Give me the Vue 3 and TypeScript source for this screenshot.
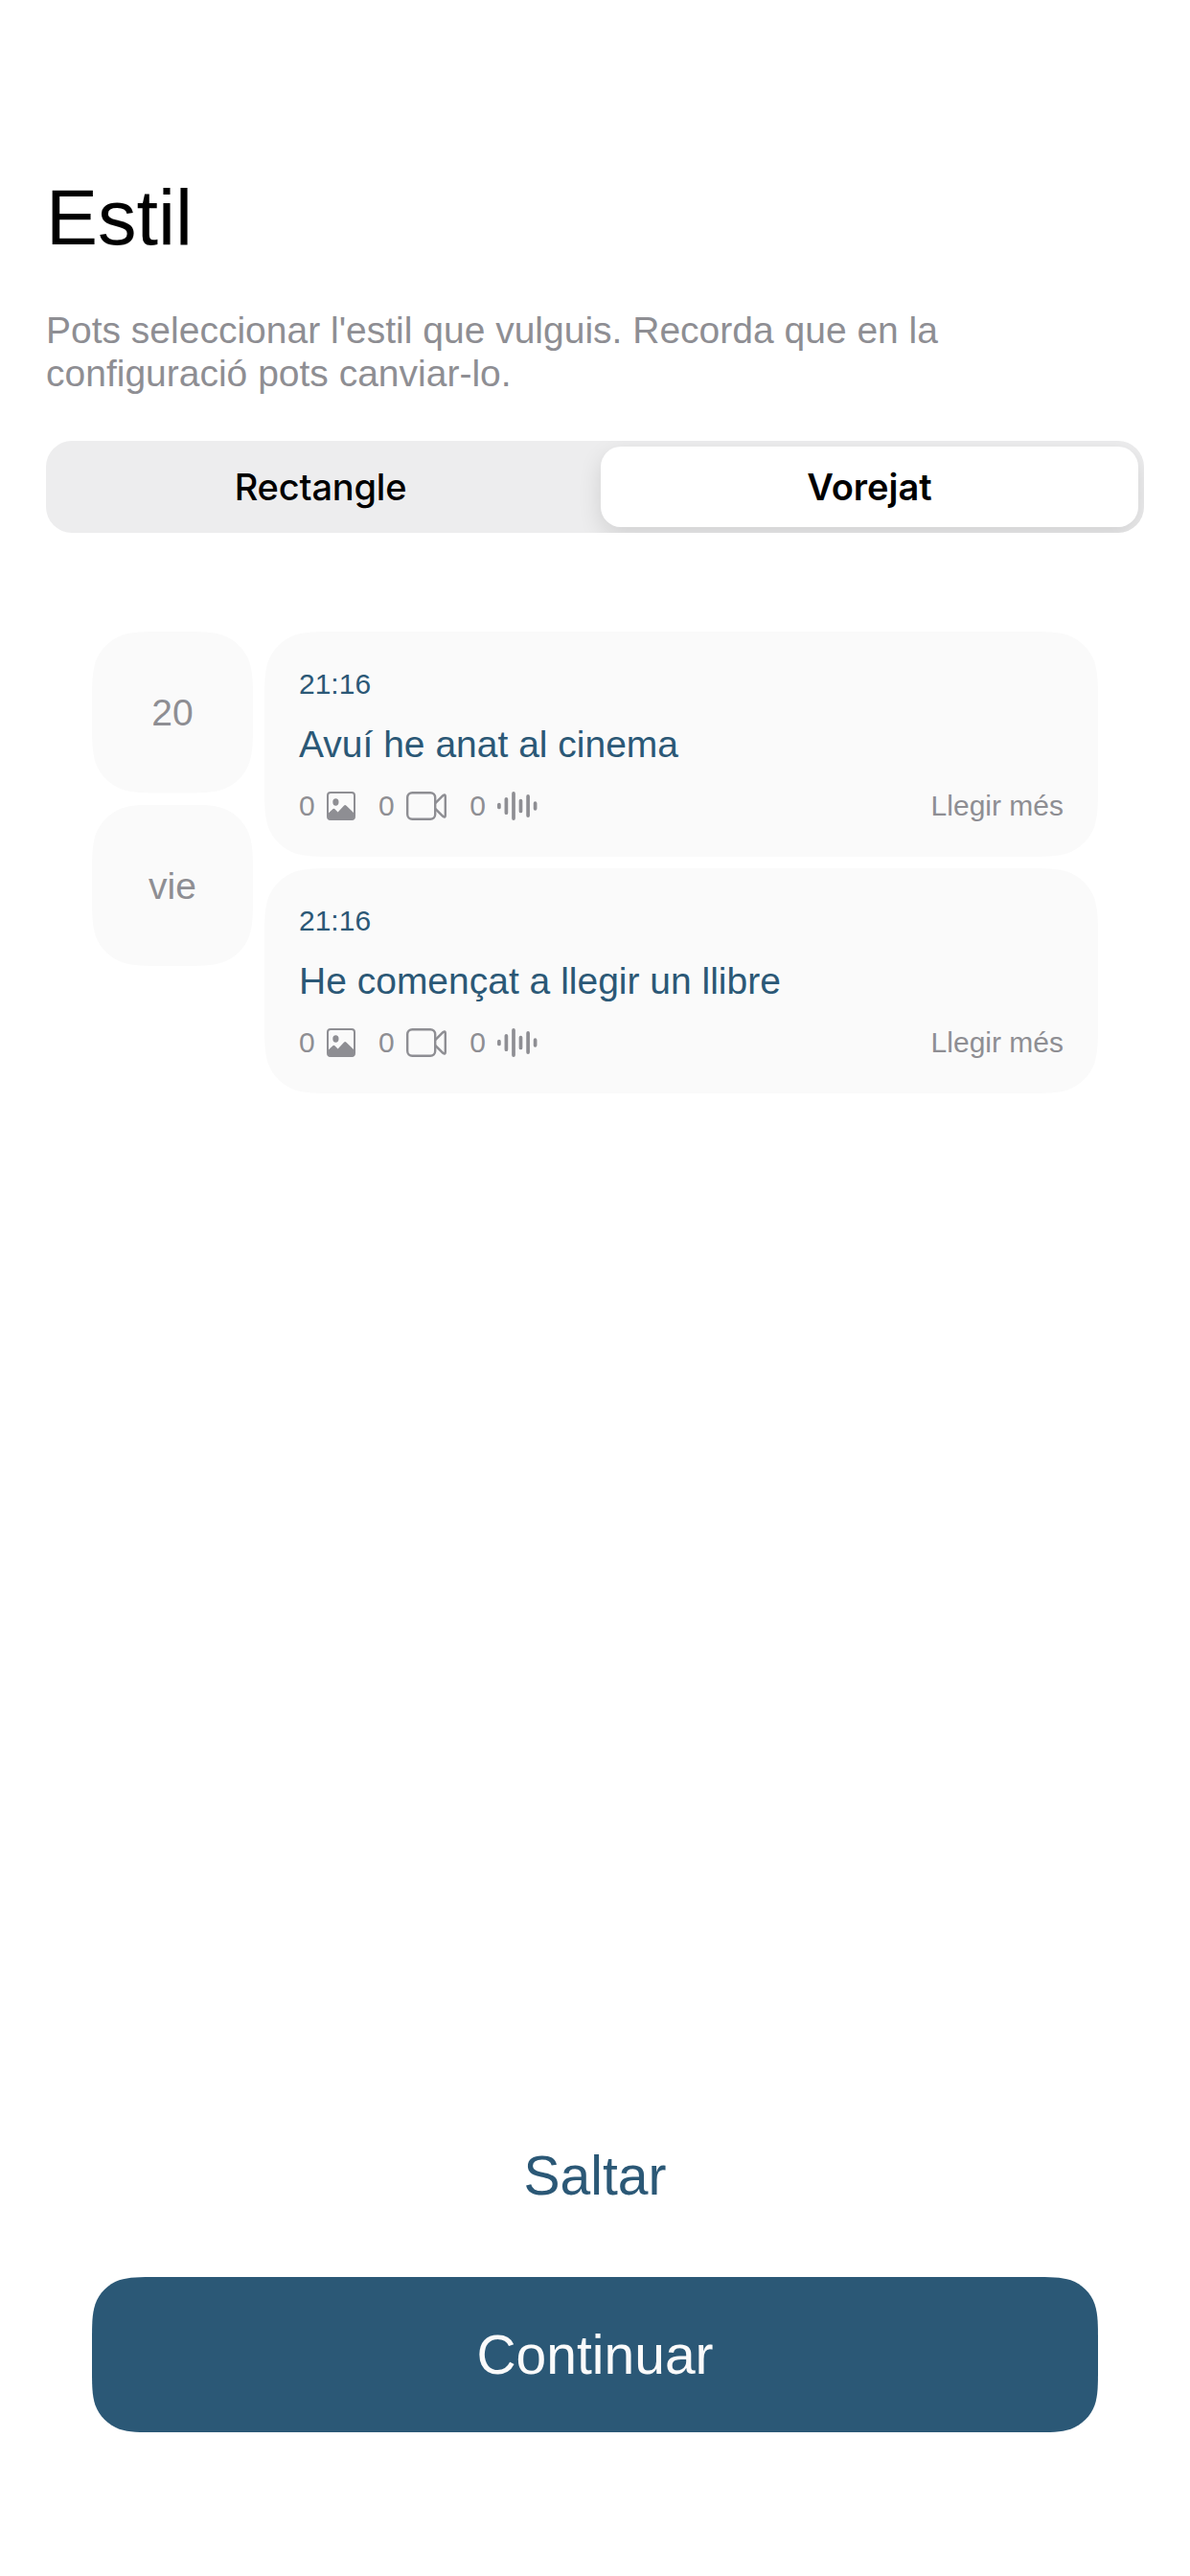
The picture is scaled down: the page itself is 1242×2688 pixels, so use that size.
<script setup lang="ts">
import { ref } from 'vue'

interface Entry {
  time: string
  title: string
}

const options: string[] = ['Rectangle', 'Vorejat']
const selected = ref('Vorejat')
const dayParts: string[] = ['20', 'vie']
const entries: Entry[] = [
  { time: '21:16', title: 'Avuí he anat al cinema' },
  { time: '21:16', title: 'He començat a llegir un llibre' },
]

// Outline of a rectangle with continuous (squircle-like) corners.
function smooth(w: number, h: number, r: number): { clipPath: string } {
  const a = 1.528665 * r
  const b = 1.088493 * r
  const c = 0.868407 * r
  const d = 0.631494 * r
  const e = 0.074911 * r
  const f = 0.372824 * r
  const g = 0.16906 * r
  const path = [
    `M${a} 0L${w - a} 0`,
    `C${w - b} 0 ${w - c} 0 ${w - d} ${e}`,
    `C${w - f} ${g} ${w - g} ${f} ${w - e} ${d}`,
    `C${w} ${c} ${w} ${b} ${w} ${a}`,
    `L${w} ${h - a}`,
    `C${w} ${h - b} ${w} ${h - c} ${w - e} ${h - d}`,
    `C${w - g} ${h - f} ${w - f} ${h - g} ${w - d} ${h - e}`,
    `C${w - c} ${h} ${w - b} ${h} ${w - a} ${h}`,
    `L${a} ${h}`,
    `C${b} ${h} ${c} ${h} ${d} ${h - e}`,
    `C${f} ${h - g} ${g} ${h - f} ${e} ${h - d}`,
    `C0 ${h - c} 0 ${h - b} 0 ${h - a}`,
    `L0 ${a}`,
    `C0 ${b} 0 ${c} ${e} ${d}`,
    `C${g} ${f} ${f} ${g} ${d} ${e}`,
    `C${c} 0 ${b} 0 ${a} 0Z`,
  ].join('')
  return { clipPath: `path("${path}")` }
}

const dayShape = smooth(168, 168.5, 50)
const entryShape = smooth(870, 235, 50)
const buttonShape = smooth(1050, 162, 45)
</script>

<template>
  <main class="screen">
    <h1 class="heading">Estil</h1>
    <p class="intro">
      Pots seleccionar l'estil que vulguis. Recorda que en la<br />configuració pots canviar-lo.
    </p>

    <div class="segments">
      <button
        v-for="option in options"
        :key="option"
        class="segment"
        :class="{ active: option === selected }"
        @click="selected = option"
      >
        {{ option }}
      </button>
    </div>

    <section class="preview">
      <div class="days">
        <div v-for="part in dayParts" :key="part" class="day" :style="dayShape">{{ part }}</div>
      </div>
      <div class="entries">
        <article v-for="entry in entries" :key="entry.title" class="entry" :style="entryShape">
          <div class="time">{{ entry.time }}</div>
          <h2 class="title">{{ entry.title }}</h2>
          <div class="meta">
            <span class="count">0
              <svg width="30" height="30" viewBox="0 0 30 30">
                <rect x="1" y="1" width="28" height="28" rx="3" fill="none" stroke="currentColor" stroke-width="2" />
                <ellipse cx="9.4" cy="11" rx="3.1" ry="3.7" fill="currentColor" />
                <path d="M1 23.2L6.3 18.2Q7.4 17.2 8.5 18.2L11.6 21.4L17.9 14.7Q19.2 13.5 20.5 14.7L29 23V27Q29 29.5 26.5 29.5H3.5Q1 29.5 1 27Z" fill="currentColor" />
              </svg>
            </span>
            <span class="count">0
              <svg width="42" height="30" viewBox="0 0 42 30" fill="none" stroke="currentColor" stroke-width="2.4" stroke-linejoin="round">
                <rect x="1.2" y="1.2" width="29" height="27.6" rx="5" />
                <path d="M30.3 12.2L38.3 4.2Q40.8 2.3 40.8 5V25Q40.8 27.7 38.3 25.8L30.3 17.8" />
              </svg>
            </span>
            <span class="count">0
              <svg width="42" height="30" viewBox="0 0 42 30" fill="none" stroke="currentColor" stroke-width="3.7" stroke-linecap="round">
                <path d="M1.9 13.5V16.5M9.4 7.8V22.2M17 1.9V28.1M24.5 9.5V20.5M32.1 4.9V25.1M39.6 12.2V17.8" />
              </svg>
            </span>
            <span class="more">Llegir més</span>
          </div>
        </article>
      </div>
    </section>

    <footer class="actions">
      <button class="skip">Saltar</button>
      <button class="next" :style="buttonShape">Continuar</button>
    </footer>
  </main>
</template>

<style>
body {
  background: #fff;
}
</style>

<style scoped>
.screen {
  box-sizing: border-box;
  width: 1242px;
  height: 2688px;
  padding: 179px 48px 150px;
  display: flex;
  flex-direction: column;
  background: #fff;
  font-family: 'Liberation Sans', Arial, sans-serif;
}

button {
  border: 0;
  padding: 0;
  background: none;
  font-family: inherit;
}

.heading {
  margin: 0;
  font-size: 81px;
  line-height: 96px;
  font-weight: 400;
  color: #000;
}

.intro {
  margin: 47px 0 48px;
  font-size: 39px;
  line-height: 45px;
  color: #8e8e93;
}

.segments {
  box-sizing: border-box;
  display: flex;
  justify-content: space-between;
  height: 96px;
  padding: 6px;
  border-radius: 27px;
  background: #ededee;
  overflow: hidden;
}

.segment {
  flex: 0 0 561px;
  border-radius: 21px;
  font-family: Inter, sans-serif;
  font-size: 38px;
  line-height: 84px;
  font-weight: 500;
  letter-spacing: -0.2px;
  color: #000;
}

.segment.active {
  background: #fff;
  box-shadow: 0 9px 24px rgba(0, 0, 0, 0.12);
  font-weight: 600;
  letter-spacing: 0;
}

.preview {
  display: flex;
  gap: 12px;
  margin: 103px 48px 0;
}

.days,
.entries {
  display: flex;
  flex-direction: column;
  gap: 12px;
}

.day {
  width: 168px;
  height: 168.5px;
  background: #fafafa;
  color: #8e8e93;
  font-size: 39px;
  line-height: 169px;
  text-align: center;
}

.entry {
  box-sizing: border-box;
  width: 870px;
  height: 235px;
  padding: 37px 36px 0;
  background: #fafafa;
  color: #2b5876;
}

.time {
  font-size: 30px;
  line-height: 36px;
}

.title {
  margin: 21px 0 22px;
  font-size: 39px;
  line-height: 48px;
  font-weight: 400;
}

.meta {
  display: flex;
  align-items: center;
  gap: 24px;
  color: #8e8e93;
  font-size: 30px;
  line-height: 36px;
}

.count {
  display: flex;
  align-items: center;
  gap: 12.4px;
}

.count svg {
  display: block;
}

.more {
  margin-left: auto;
}

.actions {
  margin: auto 48px 0;
  display: flex;
  flex-direction: column;
  align-items: center;
  gap: 70px;
}

.skip {
  font-size: 57px;
  line-height: 72px;
  color: #2b5876;
}

.next {
  width: 1050px;
  height: 162px;
  background: #2b5876;
  color: #fafafa;
  font-size: 57px;
  line-height: 162px;
}
</style>
